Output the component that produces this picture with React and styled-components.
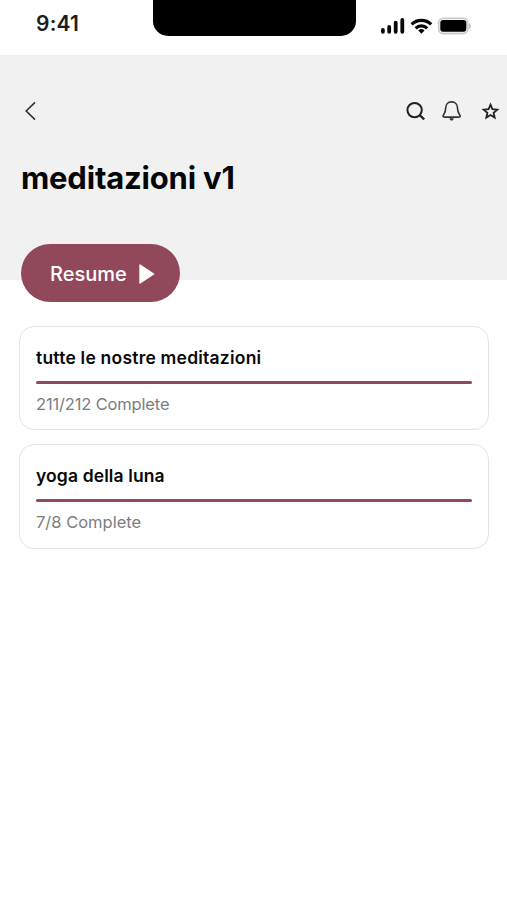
import React from 'react';
import styled, { createGlobalStyle } from 'styled-components';

const GlobalStyle = createGlobalStyle`
  * {
    box-sizing: border-box;
  }

  body {
    margin: 0;
    background: #fff;
    font-family: Inter, "Liberation Sans", sans-serif;
  }
`;

// Styled Components
const Screen = styled.div`
  width: 507px;
  height: 900px;
  overflow: hidden;
  background: #fff;
`;

const StatusBar = styled.div`
  display: grid;
  grid-template-columns: 152.5px 203px 1fr;
  height: 55px;
`;

const Time = styled.div`
  padding: 11px 0 0 36px;
  color: #1c1e22;
  font-size: 21px;
  font-weight: 600;
  line-height: 26px;
  letter-spacing: 0.2px;
`;

const Notch = styled.div`
  height: 35.5px;
  background: #000;
  border-radius: 0 0 15px 15px;
`;

const StatusIcons = styled.div`
  padding: 16px 0 0 24px;
`;

const Header = styled.header`
  height: 225px;
  padding: 43px 7px 0 20px;
  background: #f1f1f1;
`;

const NavRow = styled.div`
  display: flex;
  justify-content: space-between;
  align-items: center;
  height: 26px;
`;

const Actions = styled.div`
  display: flex;
  align-items: center;
  gap: 14px;
`;

const IconButton = styled.button`
  display: flex;
  padding: 0;
  border: none;
  background: none;
  cursor: pointer;
`;

const Title = styled.h1`
  margin: 34px 0 0 1px;
  color: #060606;
  font-size: 31px;
  font-weight: 700;
  line-height: 40px;
  letter-spacing: -0.2px;
  white-space: nowrap;
`;

const ResumeButton = styled.button`
  display: flex;
  align-items: center;
  gap: 11px;
  width: 159px;
  height: 58px;
  margin: -36px 0 0 20.5px;
  padding: 2px 0 0 29.5px;
  border: none;
  border-radius: 29px;
  background: #91485b;
  color: #fff;
  font-family: inherit;
  font-size: 20px;
  font-weight: 500;
  line-height: 26px;
  cursor: pointer;
`;

const CourseList = styled.main`
  display: flex;
  flex-direction: column;
  gap: 14px;
  padding: 23.5px 18px 0 19px;
`;

const Card = styled.section`
  height: 104.5px;
  padding: 18px 16px 0;
  border: 1px solid #e3e3e3;
  border-radius: 15px;
  background: #fff;
`;

const CardTitle = styled.h2`
  margin: 0;
  color: #080808;
  font-size: 17.5px;
  font-weight: 600;
  line-height: 25px;
  letter-spacing: ${(props) => props.$spacing};
  white-space: nowrap;
`;

const Progress = styled.div`
  height: 3px;
  margin-top: 11px;
  border-radius: 2px;
  background: #904a5d;
`;

const Count = styled.p`
  margin: 9px 0 0;
  color: #7b7d80;
  font-size: 16.5px;
  line-height: 22px;
  letter-spacing: ${(props) => props.$spacing};
`;

const courses = [
  { title: 'tutte le nostre meditazioni', done: 211, total: 212, titleSpacing: '0.22px', countSpacing: '-0.16px' },
  { title: 'yoga della luna', done: 7, total: 8, titleSpacing: '0.12px', countSpacing: '0' },
];

const App = () => {
  return (
    <>
      <GlobalStyle />
      <Screen>
        <StatusBar>
          <Time>9:41</Time>
          <Notch />
          <StatusIcons>
            <svg width="94" height="20" viewBox="380 16 94 20" fill="none">
              <g stroke="#080808" strokeWidth="3.8" strokeLinecap="round">
                <path d="M382.9 30v1.8M389.2 27v4.8M395.7 22.6v9.2M402.3 20v11.8" />
              </g>
              <g stroke="#080808" strokeWidth="3.1">
                <path d="M411.6 24.4a14 14 0 0 1 19.6 0" />
                <path d="M415.6 28.3a8.2 8.2 0 0 1 11.6 0" />
              </g>
              <path d="M418.2 30.6a4.7 4.7 0 0 1 6.4 0L421.4 33.8z" fill="#080808" />
              <rect x="438.6" y="18.2" width="29.2" height="15.4" rx="4.5" stroke="#cbcbcb" strokeWidth="1.6" fill="#f1f1f1" />
              <rect x="440.3" y="20" width="26" height="11.8" rx="2.8" fill="#000" />
              <path d="M469 23.3c2.6 1 2.6 4.6 0 5.5z" fill="#bfbfbf" />
            </svg>
          </StatusIcons>
        </StatusBar>

        <Header>
          <NavRow>
            <IconButton aria-label="Back">
              <svg width="20" height="24" viewBox="0 0 20 24" fill="none">
                <path d="M15 3.4L6.2 12l8.8 8.6" stroke="#303030" strokeWidth="1.6" />
              </svg>
            </IconButton>
            <Actions>
              <IconButton aria-label="Search">
                <svg width="22" height="24" viewBox="405 99 22 24" fill="none" stroke="#222" strokeWidth="2">
                  <circle cx="414.6" cy="110.1" r="7.2" />
                  <path d="M419.7 115.1l4.5 4.2" strokeWidth="2.3" />
                </svg>
              </IconButton>
              <IconButton aria-label="Notifications">
                <svg width="22" height="24" viewBox="441 99 22 24" fill="none" stroke="#333" strokeWidth="1.6" strokeLinejoin="round">
                  <path d="M451.6 101.9c-3.8 0-5.9 2.8-5.9 6.2 0 4.2-1 5.2-2.3 6.9-.8 1.1-.4 2.1.9 2.1h14.6c1.3 0 1.7-1 .9-2.1-1.3-1.7-2.3-2.7-2.3-6.9 0-3.4-2.1-6.2-5.9-6.2z" />
                  <path d="M449.4 118.2h4.4c-.3 1.6-1.1 2.4-2.2 2.4s-1.9-.8-2.2-2.4z" fill="#333" stroke="none" />
                </svg>
              </IconButton>
              <IconButton aria-label="Favorite">
                <svg width="23" height="24" viewBox="477 99 23 24" fill="none" stroke="#222" strokeWidth="1.8">
                  <path d="M490.5 104.7l1.9 4.5 4.9.4-3.7 3.2 1.1 4.8-4.2-2.5-4.2 2.5 1.1-4.8-3.7-3.2 4.9-.4z" />
                </svg>
              </IconButton>
            </Actions>
          </NavRow>
          <Title>meditazioni v1</Title>
        </Header>

        <ResumeButton>
          Resume
          <svg width="18" height="22" viewBox="0 0 18 22">
            <path d="M2 2l13.6 9L2 20z" fill="#fff" stroke="#fff" strokeWidth="1.4" strokeLinejoin="round" />
          </svg>
        </ResumeButton>

        <CourseList>
          {courses.map((course) => (
            <Card key={course.title}>
              <CardTitle $spacing={course.titleSpacing}>{course.title}</CardTitle>
              <Progress />
              <Count $spacing={course.countSpacing}>
                {course.done}/{course.total} Complete
              </Count>
            </Card>
          ))}
        </CourseList>
      </Screen>
    </>
  );
};

export default App;
